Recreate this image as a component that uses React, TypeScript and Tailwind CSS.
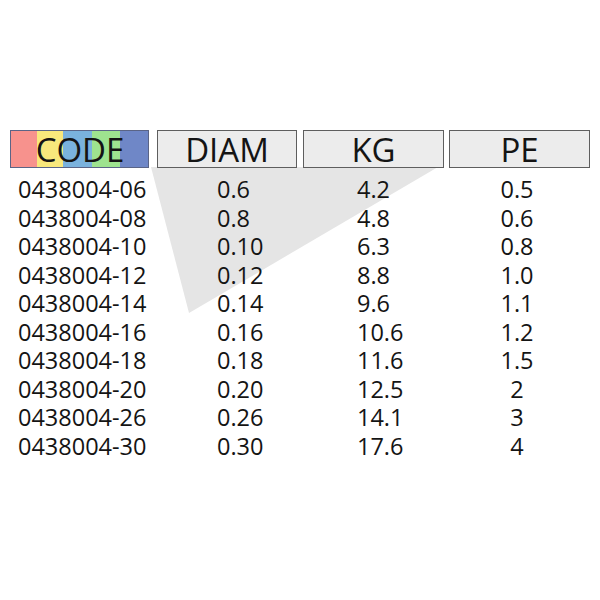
import React from "react";

const rows: [string, string, string, string][] = [
  ["0438004-06", "0.6", "4.2", "0.5"],
  ["0438004-08", "0.8", "4.8", "0.6"],
  ["0438004-10", "0.10", "6.3", "0.8"],
  ["0438004-12", "0.12", "8.8", "1.0"],
  ["0438004-14", "0.14", "9.6", "1.1"],
  ["0438004-16", "0.16", "10.6", "1.2"],
  ["0438004-18", "0.18", "11.6", "1.5"],
  ["0438004-20", "0.20", "12.5", "2"],
  ["0438004-26", "0.26", "14.1", "3"],
  ["0438004-30", "0.30", "17.6", "4"],
];

export default function App() {
  return (
    <div
      className="relative w-[600px] h-[600px] bg-white text-[#141414] overflow-hidden"
      style={{ fontFamily: '"Open Sans", "Noto Sans", sans-serif' }}
    >
      <svg className="absolute left-0 top-0" width="600" height="600" viewBox="0 0 600 600">
        <polygon points="151,167 438,167 189,313" fill="#e5e5e5" />
      </svg>
      <div className="relative flex flex-col pt-[130px] pl-[10px]">
        <div className="flex h-[38px] text-[33px] leading-none">
          <div className="relative w-[139px] h-full flex border-[1.5px] border-[#5a6486]">
            <div className="w-[26px] bg-[#f7928d]" />
            <div className="w-[26px] bg-[#f8e87c]" />
            <div className="w-[29px] bg-[#7ab2dd]" />
            <div className="w-[28px] bg-[#9ee38f]" />
            <div className="flex-1 bg-[#6f87c7]" />
            <div className="absolute inset-0 flex items-center justify-center pl-[1px]">CODE</div>
          </div>
          <div className="ml-[8px] w-[140px] h-full flex items-center justify-center bg-[#ececec] border-[1.5px] border-[#5e5e5e]">
            DIAM
          </div>
          <div className="ml-[6px] w-[141px] h-full flex items-center justify-center bg-[#ececec] border-[1.5px] border-[#5e5e5e]">
            KG
          </div>
          <div className="ml-[5px] w-[141px] h-full flex items-center justify-center bg-[#ececec] border-[1.5px] border-[#5e5e5e]">
            PE
          </div>
        </div>
        <div className="flex flex-col pt-[7px] pl-[8px] text-[23.5px]">
          {rows.map((r) => (
            <div key={r[0]} className="flex h-[28.56px] leading-[28.56px]">
              <div className="w-[199px]">{r[0]}</div>
              <div className="w-[140px]">{r[1]}</div>
              <div className="w-[120px]">{r[2]}</div>
              <div className="w-[80px] text-center">{r[3]}</div>
            </div>
          ))}
        </div>
      </div>
    </div>
  );
}
